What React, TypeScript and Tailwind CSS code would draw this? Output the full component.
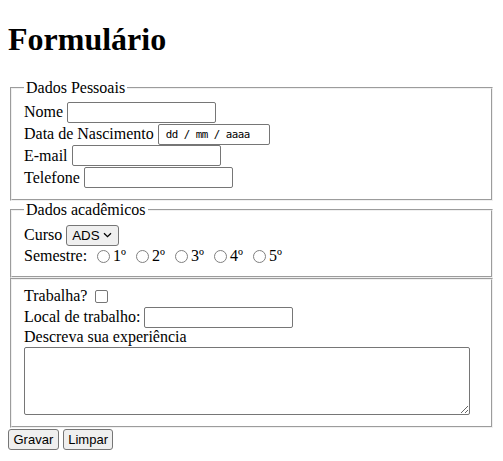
import React from 'react';

const sans = "font-['Liberation_Sans',Arial,sans-serif]";
const box = 'bg-white border border-[#767676] rounded-[2px] text-black';
const textField = `${box} ${sans} h-[21px] w-[149px] px-[2px] py-[1px] text-[13.33px]`;
const fieldset =
  "mx-[2px] border-2 [border-style:groove] border-[#f0f0f0] px-3 min-w-min";
const row = 'flex items-center gap-1';
const button = `h-[21px] px-[4.5px] border border-[#767676] rounded-[3px] bg-[#efefef] text-[13px] text-black ${sans}`;

const semestres = ['1º', '2º', '3º', '4º', '5º'];

export default function App() {
  return (
    <div className="m-2 text-[16px] leading-[normal] text-black font-['Liberation_Serif','Times_New_Roman',serif]">
      <h1 className="text-[32px] font-bold mt-[21.44px] mb-[21px] leading-[normal]">Formulário</h1>
      <form>
        <fieldset className={`${fieldset} pt-[4px] pb-[11px]`}>
          <legend className="px-[2px]">Dados Pessoais</legend>
          <div className={`${row} h-[21.75px]`}>
            <span>Nome</span>
            <input type="text" className={textField} />
          </div>
          <div className={`${row} h-[21.75px]`}>
            <span>Data de Nascimento</span>
            <span className={`${box} inline-flex items-center h-[21px] w-[112px] pl-[7px] font-['DejaVu_Sans_Mono',monospace] text-[10.8px] tracking-[-0.5px]`}>
              dd / mm / aaaa
            </span>
          </div>
          <div className={`${row} h-[21.75px]`}>
            <span>E-mail</span>
            <input type="email" className={textField} />
          </div>
          <div className={`${row} h-[21.75px]`}>
            <span>Telefone</span>
            <input type="tel" className={textField} />
          </div>
        </fieldset>

        <fieldset className={`${fieldset} pt-[5px] pb-[10.5px]`}>
          <legend className="px-[2px]">Dados acadêmicos</legend>
          <div className={`${row} h-[21.75px]`}>
            <span>Curso</span>
            <span className={`inline-flex items-center justify-between h-[21px] w-[53px] pl-[5px] pr-[5px] border border-[#767676] rounded-[3px] bg-[#efefef] text-[13.33px] ${sans}`}>
              ADS
              <svg width="9" height="6" viewBox="0 0 9 6" className="mr-[1px]">
                <path d="M1 1.2l3.5 3.4L8 1.2" fill="none" stroke="#000" strokeWidth="1.3" />
              </svg>
            </span>
          </div>
          <div className="flex items-center h-[19.5px]">
            <span>Semestre:</span>
            {semestres.map((s, i) => (
              <React.Fragment key={s}>
                <input
                  type="radio"
                  name="semestre"
                  id={`sem-${i}`}
                  className="appearance-none ml-[10px] mr-[3px] mt-[2px] w-[13px] h-[13px] rounded-full border border-[#808080] bg-white"
                />
                <label htmlFor={`sem-${i}`}>{s}</label>
              </React.Fragment>
            ))}
          </div>
        </fieldset>

        <fieldset className={`${fieldset} pt-[5.6px] pb-[10px]`}>
          <div className="flex items-center h-[20.5px]">
            <span>Trabalha?</span>
            <input
              type="checkbox"
              className="appearance-none ml-[8px] mt-[1px] w-[13px] h-[13px] rounded-[2px] border border-[#767676] bg-white"
            />
          </div>
          <div className={`${row} h-[22px]`}>
            <span>Local de trabalho:</span>
            <input type="text" className={textField} />
          </div>
          <div className="h-[18.4px]">Descreva sua experiência</div>
          <div className="h-[69.5px]">
            <textarea className={`${box} block w-[446px] h-[68px] px-[2px] py-[2px] text-[13px] font-['DejaVu_Sans_Mono',monospace] resize`} />
          </div>
        </fieldset>

        <div className="flex gap-1 mt-[1px]">
          <button type="button" className={button}>Gravar</button>
          <button type="button" className={button}>Limpar</button>
        </div>
      </form>
    </div>
  );
}
